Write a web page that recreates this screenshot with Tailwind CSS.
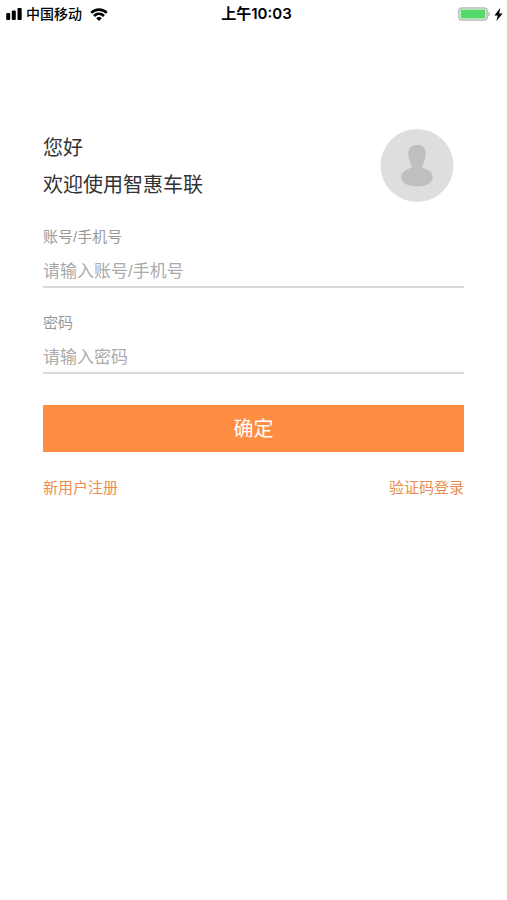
<!DOCTYPE html>
<html lang="zh-CN">
<head>
    <meta charset="UTF-8">
    <meta name="viewport" content="width=device-width, initial-scale=1.0">
    <title>智惠车联</title>
    <script src="https://cdn.jsdelivr.net/npm/@tailwindcss/browser@4"></script>
</head>
<body class="min-h-screen bg-white font-['Liberation_Sans','Noto_Sans_CJK_SC',sans-serif]">
    <!-- Status bar -->
    <header class="flex items-center justify-between h-7 pl-1.5 pr-1 text-black font-['Inter','Noto_Sans_CJK_SC',sans-serif]">
        <div class="flex flex-1 items-center">
            <svg class="w-4 h-3 mr-1" viewBox="0 0 16 12" fill="currentColor">
                <rect x="0.2" y="5" width="4" height="7" rx="1"/>
                <rect x="5.8" y="2.4" width="4" height="9.6" rx="1"/>
                <rect x="11.5" y="0" width="4.2" height="12" rx="1"/>
            </svg>
            <span class="text-sm font-medium">中国移动</span>
            <svg class="w-[18px] h-[13px] ml-2" viewBox="0 0 18 13" fill="none" stroke="currentColor" stroke-width="2.6">
                <path d="M1.2 4.9C5.6 0.5 12.4 0.5 16.8 4.9"/>
                <path d="M4 8C6.9 5.2 11.1 5.2 14 8"/>
                <path d="M6.2 10.2C7.8 8.6 10.2 8.6 11.8 10.2L9 13Z" fill="currentColor" stroke="none"/>
            </svg>
        </div>
        <span class="pl-1 text-[15px] font-semibold">上午10:03</span>
        <div class="flex flex-1 items-center justify-end">
            <svg class="w-8 h-[14px]" viewBox="0 0 32 14">
                <rect x="0.9" y="0.9" width="28.2" height="12.2" rx="3" fill="#fff" stroke="#b3bdb3" stroke-width="1.5"/>
                <rect x="2.6" y="2.6" width="24.8" height="8.8" rx="1" fill="#55d968"/>
                <path d="M30.2 4.8C32.4 5.2 32.4 8.8 30.2 9.2Z" fill="#b3bdb3"/>
            </svg>
            <svg class="w-[9px] h-[13px] ml-1" viewBox="0 0 9 13" fill="currentColor">
                <path d="M6.2 0L0.4 7.4H3.7L2.4 13L8.7 5.4H5.2Z"/>
            </svg>
        </div>
    </header>

    <main class="px-[43px] pt-[100px]">
        <div class="flex items-start justify-between pr-2.5">
            <h1 class="pt-0.5 text-xl leading-[37px] text-[#333]">您好<br>欢迎使用智惠车联</h1>
            <svg class="w-[74px] h-[74px]" viewBox="0 0 74 74">
                <circle cx="37" cy="37.5" r="36.5" fill="#dedede"/>
                <path d="M37 16.8C31.5 16.8 28.3 20 28.3 25.5C28.3 31 30.5 35.5 31.8 37.5C32 39.3 31.2 39.8 29.5 40.4C24.5 42 21.3 45.2 21.3 49.2C21.3 55 28 58.3 37 58.3S52.7 55 52.7 49.2C52.7 45.2 49.5 42 44.5 40.4C42.8 39.8 42 39.3 42.2 37.5C43.5 35.5 45.7 31 45.7 25.5C45.7 20 42.5 16.8 37 16.8Z" fill="#bfbfbf"/>
            </svg>
        </div>

        <form id="loginForm" class="mt-[21px]">
            <label for="account" class="block text-[15px] leading-6 text-[#999]">账号/手机号</label>
            <input type="text" id="account" name="account" placeholder="请输入账号/手机号" class="block w-full h-[39px] pt-2 border-b-2 border-[#dadada] text-[17px] text-[#333] placeholder:text-[#aaa] outline-none">

            <label for="password" class="block mt-[23px] text-[15px] leading-6 text-[#999]">密码</label>
            <input type="password" id="password" name="password" placeholder="请输入密码" class="block w-full h-[39px] pt-2 border-b-2 border-[#dadada] text-[17px] text-[#333] placeholder:text-[#aaa] outline-none">

            <button type="submit" class="block mt-[31px] w-full h-[47px] bg-[#ff8d42] text-xl text-white">确定</button>
        </form>

        <div class="flex justify-between mt-6 text-[15px] leading-6 text-[#eb8d50]">
            <a href="#">新用户注册</a>
            <a href="#">验证码登录</a>
        </div>
    </main>
</body>
</html>
